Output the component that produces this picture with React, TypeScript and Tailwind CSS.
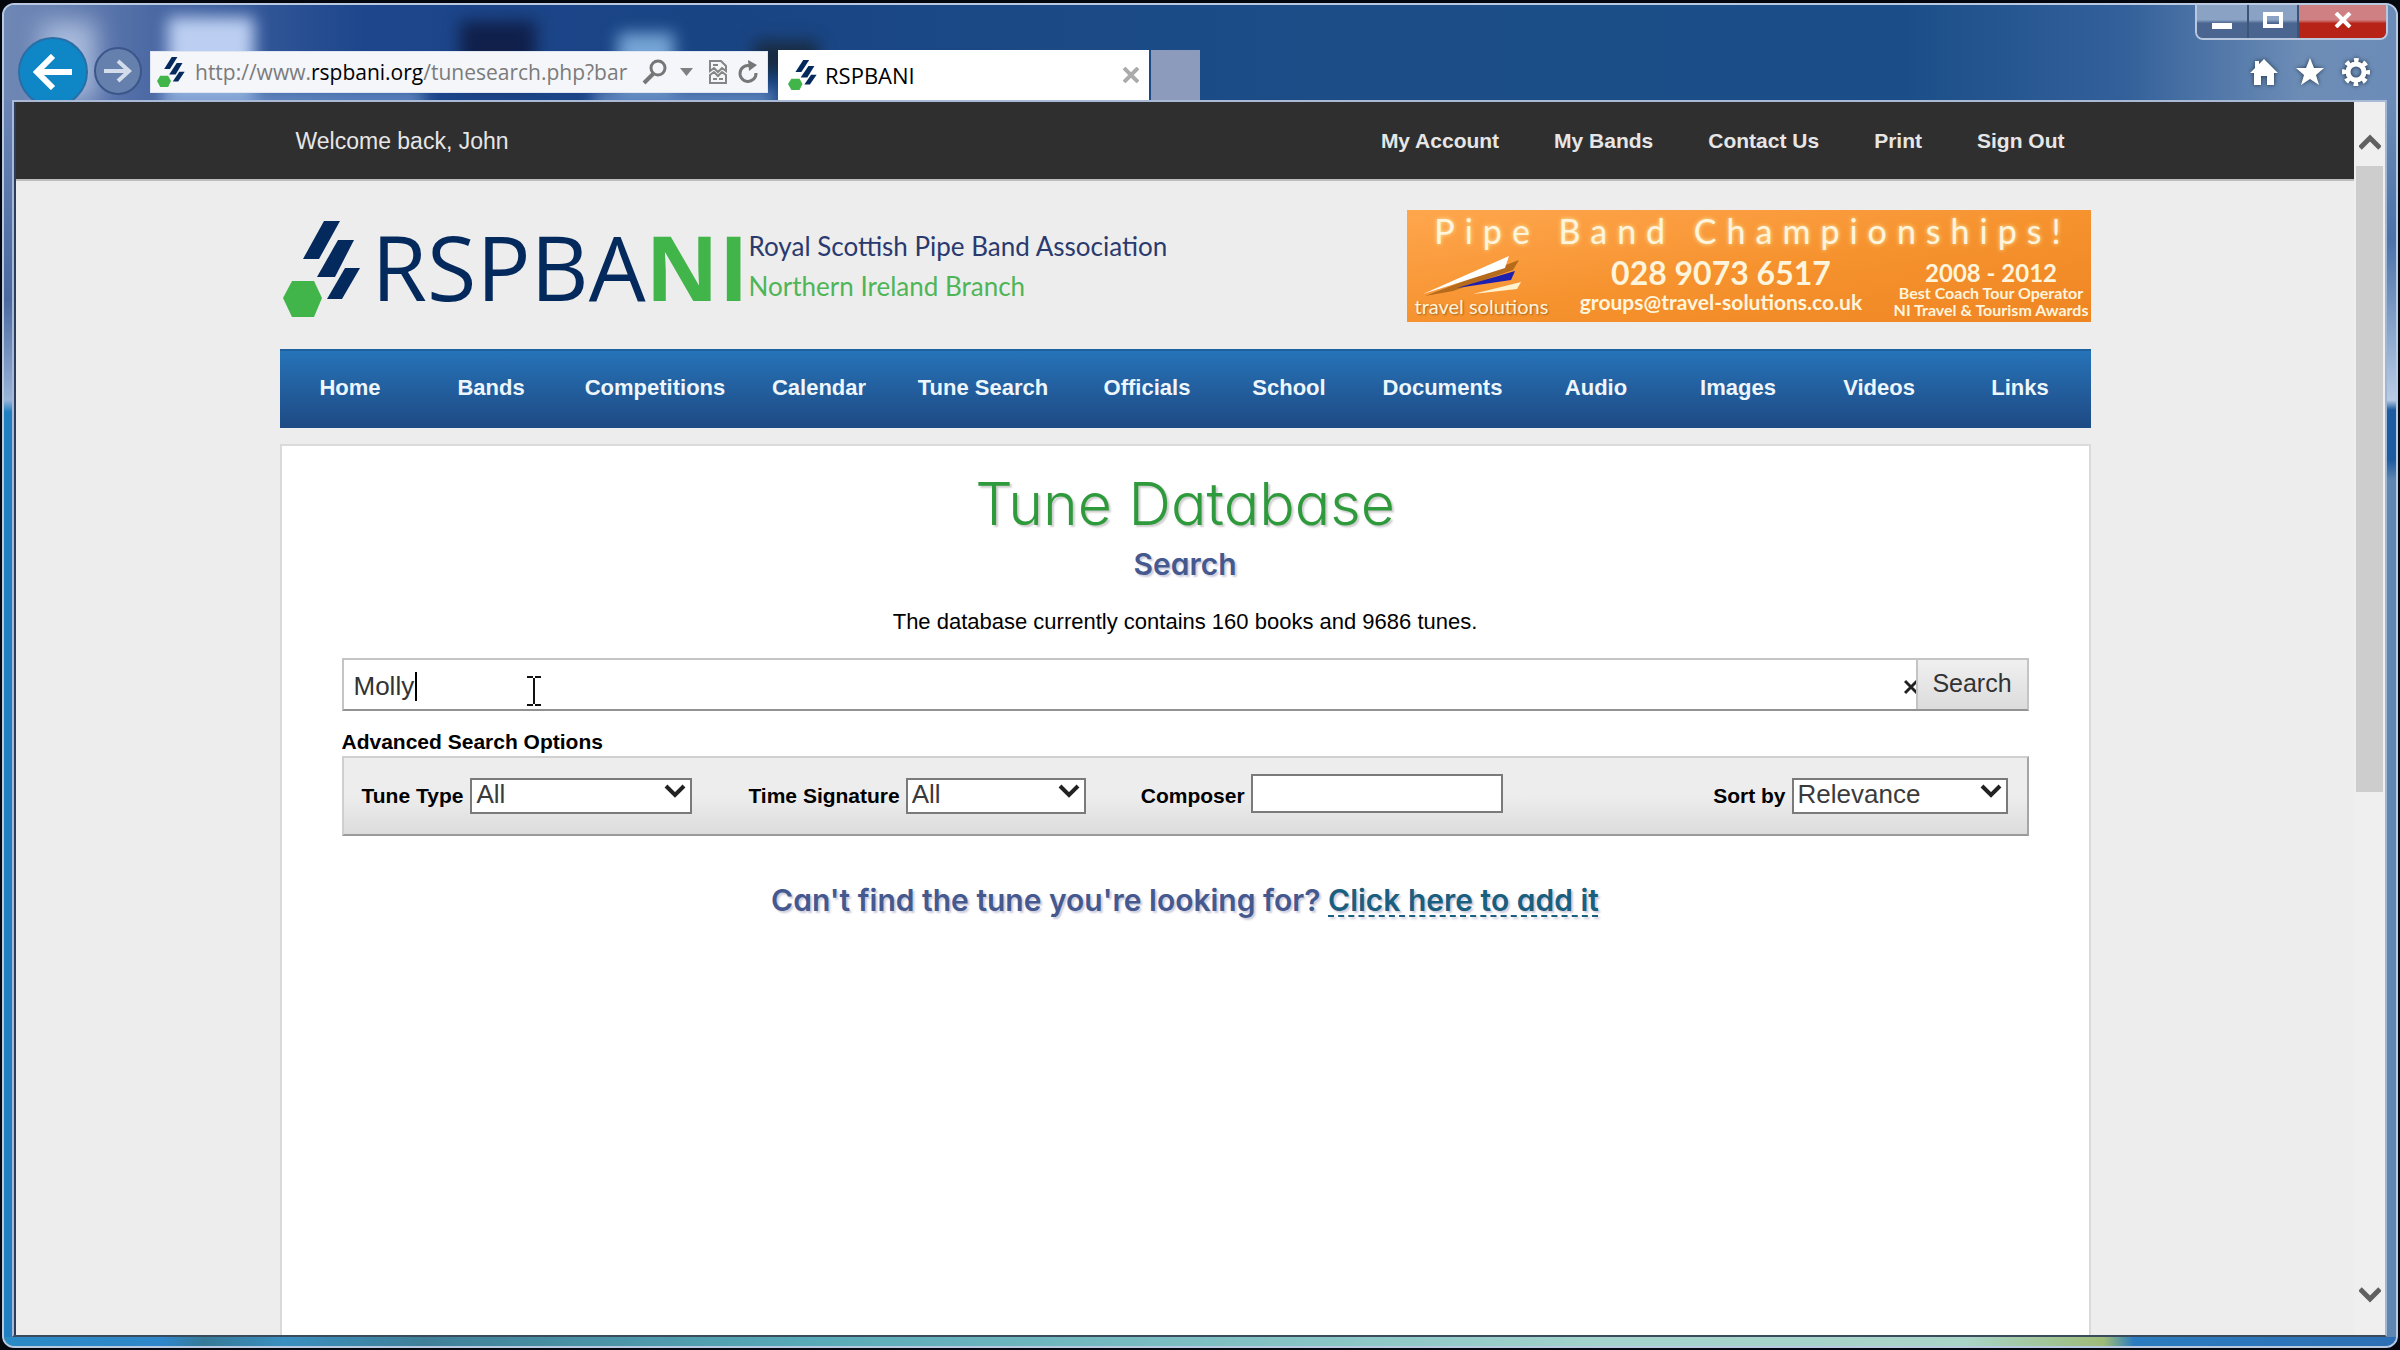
import { useState } from "react";

type NavItem = { label: string; width: string };

const accountLinks = ["My Account", "My Bands", "Contact Us", "Print", "Sign Out"];

const navItems: NavItem[] = [
  { label: "Home", width: "w-[141px]" },
  { label: "Bands", width: "w-[141px]" },
  { label: "Competitions", width: "w-[187px]" },
  { label: "Calendar", width: "w-[141px]" },
  { label: "Tune Search", width: "w-[187px]" },
  { label: "Officials", width: "w-[141px]" },
  { label: "School", width: "w-[143px]" },
  { label: "Documents", width: "w-[164px]" },
  { label: "Audio", width: "w-[143px]" },
  { label: "Images", width: "w-[141px]" },
  { label: "Videos", width: "w-[141px]" },
  { label: "Links", width: "w-[141px]" },
];

function LogoMark({ className }: { className: string }) {
  return (
    <svg viewBox="0 0 78 96" className={className} preserveAspectRatio="none" aria-hidden="true">
      <g fill="#04295c">
        <path d="M41 0H57L36 38H20Z" />
        <path d="M55 19H71L52 56H34Z" />
        <path d="M62 47H77L59 78H44Z" />
      </g>
      <path d="M9 60H31L39 77L31 96H9L0 77Z" fill="#41b549" />
    </svg>
  );
}

function WindowButtons() {
  const base =
    "flex h-[33px] items-center justify-center bg-linear-to-b from-[#8aa2c4] from-45% to-[#4a6690] to-55%";
  return (
    <div className="mr-2 flex overflow-hidden rounded-b-lg border-2 border-t-0 border-[#b9c8de]">
      <button aria-label="Minimize" className={`${base} w-[52px] border-r-2 border-[#3b5479]`}>
        <span className="mt-2 h-[6px] w-[20px] bg-white" />
      </button>
      <button aria-label="Maximize" className={`${base} w-[50px] border-r-2 border-[#3b5479]`}>
        <span className="mb-1 h-[16px] w-[20px] border-4 border-white" />
      </button>
      <button
        aria-label="Close"
        className="flex h-[33px] w-[87px] items-center justify-center bg-linear-to-b from-[#cf8083] from-45% to-[#b82318] to-55%"
      >
        <svg viewBox="0 0 18 16" className="mb-1 h-4 w-[18px]">
          <path d="M2 1L16 15M16 1L2 15" stroke="#fff" strokeWidth="4" />
        </svg>
      </button>
    </div>
  );
}

function AddressBar() {
  return (
    <div className="flex h-[42px] w-[618px] items-center border border-[#dfe6f2] bg-[#f4f6fa] pr-2 pl-[6px]">
      <LogoMark className="h-[30px] w-[28px] shrink-0" />
      <div className="ml-[10px] w-[450px] font-['Open_Sans',sans-serif] text-[21px] leading-[30px] whitespace-nowrap text-[#7b7b7b]">
        http://www.<span className="text-black">rspbani.org</span>/tunesearch.php?bar
      </div>
      <button aria-label="Search" className="text-[#777]">
        <svg viewBox="0 0 26 26" className="size-[26px]" fill="none" stroke="currentColor">
          <circle cx="16" cy="9" r="7" strokeWidth="3" />
          <path d="M11 15L2 24" strokeWidth="4" />
        </svg>
      </button>
      <button aria-label="Show address list" className="ml-3">
        <svg viewBox="0 0 13 8" className="h-2 w-[13px]">
          <path d="M0 0H13L6.5 8Z" fill="#808080" />
        </svg>
      </button>
      <button aria-label="Compatibility view" className="ml-4">
        <svg viewBox="0 0 18 24" className="h-6 w-[18px]" fill="none" stroke="#858585" strokeWidth="2">
          <path d="M1 11V1H12L17 6V11L13 8L9 12L5 8Z" />
          <path d="M1 23V15L5 12L9 16L13 12L17 15V23Z" />
          <path d="M4 19H8M10 19H14M4 5H9" />
        </svg>
      </button>
      <button aria-label="Refresh" className="ml-[10px]">
        <svg viewBox="0 0 22 24" className="h-6 w-[22px]" fill="none">
          <path d="M14 6A8 8 0 1 0 19 13" stroke="#777" strokeWidth="3" />
          <path d="M11 0L20 5L12 11Z" fill="#777" />
        </svg>
      </button>
    </div>
  );
}

function BrowserChrome() {
  return (
    <header className="relative flex h-[95px] items-start overflow-hidden bg-[linear-gradient(90deg,#7088b5_0,#5470a8_120px,#41619f_180px,#1d468c_360px,#194484_700px,#1c4d87_1300px,#1b4e88_1900px,#33609a_2120px,#6d8db6_2300px,#6b8cb8_100%)]">
      {/* desktop icons showing through the glass frame */}
      <div className="absolute top-4 left-9 h-20 w-14 bg-[#a9bbdc] blur-md" />
      <div className="absolute top-3 left-[164px] h-24 w-[86px] bg-[#bccff2] blur-sm" />
      <div className="absolute top-4 left-[456px] h-16 w-[76px] bg-[#10204b] blur-sm" />
      <div className="absolute top-7 left-[614px] h-16 w-[56px] bg-[#76a5d6] blur-sm" />
      <div className="absolute top-9 left-[750px] h-8 w-[64px] bg-[#182b40] blur-sm" />
      <div className="absolute top-[86px] left-[160px] h-4 w-[260px] bg-[#6c92c8] blur-sm" />
      <div className="absolute top-[86px] left-[590px] h-4 w-[180px] bg-[#6c92c8] blur-sm" />

      <nav className="relative mt-[32px] ml-[14px] flex">
        <button
          aria-label="Back"
          className="flex size-[70px] shrink-0 items-center justify-center rounded-full border-2 border-[#2a6ea6] bg-[#0f86c6]"
        >
          <svg viewBox="0 0 40 36" className="h-9 w-10" fill="none" stroke="#fff" strokeWidth="6">
            <path d="M39 18H5M20 2L4 18L20 34" />
          </svg>
        </button>
        <button
          aria-label="Forward"
          className="mt-[10px] ml-[6px] flex size-[48px] shrink-0 items-center justify-center rounded-full border-2 border-[#3a568a] bg-[#6680ad]"
        >
          <svg viewBox="0 0 28 24" className="h-6 w-7" fill="none" stroke="#d3dcea" strokeWidth="4">
            <path d="M0 12H25M14 2L25 12L14 22" />
          </svg>
        </button>
      </nav>
      <div className="relative mt-[46px] ml-[8px]">
        <AddressBar />
      </div>
      <div className="relative mt-[45px] ml-[10px] flex h-[50px] items-stretch">
        <div className="flex w-[371px] items-center bg-white pr-[10px] pl-[10px]">
          <LogoMark className="h-[30px] w-[29px]" />
          <span className="ml-2 flex-1 font-['Open_Sans',sans-serif] text-[22px] leading-[30px] text-black">
            RSPBANI
          </span>
          <button aria-label="Close tab">
            <svg viewBox="0 0 16 16" className="size-4">
              <path d="M1 1L15 15M15 1L1 15" stroke="#ababab" strokeWidth="4" />
            </svg>
          </button>
        </div>
        <button aria-label="New tab" className="ml-[2px] w-[49px] bg-[#8c9abb]" />
      </div>
      <div className="relative ml-auto flex flex-col items-end">
        <WindowButtons />
        <div className="mt-[18px] mr-[26px] flex gap-[18px] text-white">
          <button aria-label="Home">
            <svg viewBox="0 0 28 28" className="size-7 drop-shadow-[0_0_2px_#234]" fill="currentColor">
              <path d="M14 1L28 15H24V27H17V18H11V27H4V15H0L5 10V3H9V6Z" />
            </svg>
          </button>
          <button aria-label="Favorites">
            <svg viewBox="0 0 28 28" className="size-7 drop-shadow-[0_0_2px_#234]" fill="currentColor">
              <path d="M14 0L18 10H28L20 17L23 27L14 21L5 27L8 17L0 10H10Z" />
            </svg>
          </button>
          <button aria-label="Tools">
            <svg viewBox="0 0 28 28" className="size-7 drop-shadow-[0_0_2px_#234]" fill="none" stroke="currentColor">
              <circle cx="14" cy="14" r="8" strokeWidth="5" />
              <circle cx="14" cy="14" r="12" strokeWidth="4" strokeDasharray="4.7 4.72" strokeDashoffset="2.35" />
            </svg>
          </button>
        </div>
      </div>
    </header>
  );
}

function Banner() {
  return (
    <a
      href="#travel"
      className="flex h-[112px] w-[684px] flex-col bg-linear-to-br from-[#ffa64d] via-[#f6932f] to-[#ee8522] font-['Lato',sans-serif] text-[#fff4dc]"
    >
      <span className="pt-[2px] pl-2 text-center text-[34px] leading-[38px] tracking-[10px] whitespace-nowrap [text-shadow:0_0_4px_#ffe9a8]">
        Pipe Band Championships!
      </span>
      <span className="flex flex-1 items-start justify-between pr-[2px] pl-2">
        <span className="flex flex-col pt-1">
          <svg viewBox="0 0 110 42" className="ml-2 h-[42px] w-[110px]">
            <path d="M2 42L96 6L90 16L30 37Z" fill="#b56a1c" />
            <path d="M0 40L86 2L82 14Z" fill="#fff" />
            <path d="M34 34L92 17L88 26Z" fill="#1d1fae" />
            <path d="M50 40L98 28L94 35Z" fill="#fff3cf" />
          </svg>
          <span className="text-[20px] leading-[20px] [text-shadow:1px_1px_2px_#a8621c]">
            travel solutions
          </span>
        </span>
        <span className="flex flex-col items-center pt-1 font-bold">
          <span className="text-[32px] leading-[38px]">028 9073 6517</span>
          <span className="text-[21px] leading-[20px]">groups@travel-solutions.co.uk</span>
        </span>
        <span className="flex flex-col items-center pt-3 font-bold">
          <span className="text-[24px] leading-[22px]">2008 - 2012</span>
          <span className="text-[16px] leading-[17px]">Best Coach Tour Operator</span>
          <span className="text-[16px] leading-[17px]">NI Travel &amp; Tourism Awards</span>
        </span>
      </span>
    </a>
  );
}

function SelectBox({ id, value, className }: { id: string; value: string; className: string }) {
  return (
    <div className={`relative ${className}`}>
      <select
        id={id}
        defaultValue={value}
        className="h-9 w-full appearance-none border-2 border-[#7a7a7a] bg-white pb-1 pl-1 text-[26px] leading-[28px] font-normal text-[#3b3b3b]"
      >
        <option>{value}</option>
      </select>
      <svg
        viewBox="0 0 22 14"
        className="pointer-events-none absolute top-[10px] right-[6px] h-[14px] w-[22px]"
        fill="none"
      >
        <path d="M2 2L11 11L20 2" stroke="#222" strokeWidth="4" />
      </svg>
    </div>
  );
}

function TuneSearch() {
  const [query, setQuery] = useState("Molly");
  const [composer, setComposer] = useState("");

  return (
    <main className="flex-1 border-2 border-b-0 border-[#dadada] bg-white px-[60px] text-black">
      <h1 className="mt-[26px] text-center font-['Inter',sans-serif] text-[59px] leading-[64px] font-light text-[#2e9a3c] [font-feature-settings:'cv11'] [text-shadow:2px_2px_2px_#ccc]">
        Tune Database
      </h1>
      <h2 className="mt-1 text-center font-['Inter',sans-serif] text-[30px] leading-[48px] font-semibold text-[#45598f] [font-feature-settings:'cv11'] [text-shadow:2px_2px_2px_#ccd]">
        Search
      </h2>
      <p className="mt-[18px] text-center text-[22px] leading-[32px]">
        The database currently contains 160 books and 9686 tunes.
      </p>

      <form onSubmit={(event) => event.preventDefault()}>
        <div className="relative mt-[20px] flex h-[53px] border-2 border-[#c4c4c4] border-b-[#929292]">
          <input
            aria-label="Tune name"
            value={query}
            onChange={(event) => setQuery(event.target.value)}
            className="min-w-0 flex-1 pt-[2px] pl-[10px] text-[26px] leading-[32px] text-[#333] outline-none"
          />
          <button type="button" aria-label="Clear" onClick={() => setQuery("")} className="pt-1">
            <svg viewBox="0 0 12 16" className="h-4 w-3">
              <path d="M1 2L13 14M13 2L1 14" stroke="#222" strokeWidth="3" />
            </svg>
          </button>
          <button
            type="submit"
            className="w-[111px] border-l-2 border-[#c4c4c4] bg-linear-to-b from-[#f0f0f0] to-[#dcdcdc] pb-1 text-[25px] leading-[32px] text-[#333]"
          >
            Search
          </button>
          <span className="absolute top-[12px] left-[71px] h-[29px] w-[2px] bg-black" />
          <svg viewBox="0 0 14 30" className="absolute top-[16px] left-[183px] h-[30px] w-[14px]">
            <path d="M0 1H6M8 1H14M7 2V28M0 29H6M8 29H14" stroke="#111" strokeWidth="2" />
          </svg>
        </div>

        <h3 className="mt-[17px] text-[21px] leading-[28px] font-bold">Advanced Search Options</h3>
        <div className="flex h-[80px] items-start border-2 border-[#cfcfcf] border-r-[#a5a5a5] border-b-[#9a9a9a] bg-linear-to-b from-[#ededed] from-50% to-[#dcdcdc] pt-4 pr-[19px] pl-[18px] text-[21px] leading-[44px] font-bold">
          <label htmlFor="tune-type">Tune Type</label>
          <SelectBox id="tune-type" value="All" className="ml-[7px] w-[222px]" />
          <label htmlFor="time-signature" className="ml-[56px]">
            Time Signature
          </label>
          <SelectBox id="time-signature" value="All" className="ml-[6px] w-[180px]" />
          <label htmlFor="composer" className="ml-[55px]">
            Composer
          </label>
          <input
            id="composer"
            value={composer}
            onChange={(event) => setComposer(event.target.value)}
            className="ml-[6px] h-[39px] w-[252px] border-2 border-[#7a7a7a] bg-white px-1 font-normal"
          />
          <label htmlFor="sort-by" className="ml-auto">
            Sort by
          </label>
          <SelectBox id="sort-by" value="Relevance" className="ml-[6px] w-[216px]" />
        </div>
      </form>

      <p className="mt-[44px] text-center font-['Inter',sans-serif] text-[30px] leading-[40px] font-semibold text-[#45598f] [font-feature-settings:'cv11'] [text-shadow:2px_2px_2px_#ccd]">
        Can't find the tune you're looking for?{" "}
        <a
          href="#add"
          className="text-[#1b5f7f] underline decoration-dashed decoration-2 underline-offset-4 [text-decoration-skip-ink:none]"
        >
          Click here to add it
        </a>
      </p>
    </main>
  );
}

function Scrollbar() {
  return (
    <div className="flex w-[31px] shrink-0 flex-col bg-[#efefef] px-[2px]">
      <button aria-label="Scroll up" className="flex h-[64px] items-center justify-center pt-4">
        <svg viewBox="0 0 22 18" className="h-[18px] w-[22px]">
          <path d="M1 15L11 5L21 15" fill="none" stroke="#606060" strokeWidth="5" />
        </svg>
      </button>
      <div className="h-[626px] bg-[#cdcdcd]" />
      <button aria-label="Scroll down" className="mt-auto flex h-[80px] items-center justify-center">
        <svg viewBox="0 0 22 18" className="h-[18px] w-[22px]">
          <path d="M1 3L11 13L21 3" fill="none" stroke="#606060" strokeWidth="5" />
        </svg>
      </button>
    </div>
  );
}

export default function App() {
  return (
    <div className="flex min-h-screen flex-col bg-[#05070f] px-[2px] pt-[3px] pb-[2px] font-['Liberation_Sans',Arial,sans-serif]">
      <div className="flex flex-1 flex-col overflow-hidden rounded-xl border-2 border-[#b9c9e2] bg-[#1f7fc0]">
        <BrowserChrome />
        <div className="flex flex-1 flex-col bg-[linear-gradient(90deg,#2a8ac4_0,#2f87c9_160px,#367a98_200px,#3a8fc0_280px,#3f8098_420px,#58aab8_800px,#a3d3cc_1600px,#a9d4c8_1960px,#9dbb78_2100px,#2b7cc0_2130px,#2d6fb4_100%)] pb-[9px]">
          <div className="flex flex-1">
            <div className="w-[8px] shrink-0 bg-[linear-gradient(#6a85b4_0,#4b69a0_200px,#9ab4d8_300px,#1f7fc0_312px,#1f7fc0_100%)]" />
            <div className="flex flex-1 border-2 border-[#a9b9d6] border-r-[#9fb6d4] border-b-[#3b4a5c]">
              <div className="flex flex-1 flex-col border-l-2 border-[#2b3c5c] bg-[#ededed]">
                <div className="border-b-2 border-[#bdbdbd] bg-[#2f2f2f]">
                  <div className="mx-auto flex h-[77px] w-full max-w-[1811px] items-center justify-between pr-[26px] pl-4 text-[#e6e6e6]">
                    <span className="text-[23px] leading-[32px]">Welcome back, John</span>
                    <nav className="flex gap-[55px] text-[21px] leading-[32px] font-bold">
                      {accountLinks.map((label) => (
                        <a key={label} href="#account">
                          {label}
                        </a>
                      ))}
                    </nav>
                  </div>
                </div>

                <div className="mx-auto flex w-full max-w-[1811px] flex-1 flex-col">
                  <div className="flex h-[168px] items-start justify-between pt-[29px]">
                    <a href="#home" className="flex items-start pl-[3px]">
                      <LogoMark className="mt-[11px] h-[96px] w-[78px]" />
                      <span className="mt-[8px] ml-[11px] font-['Open_Sans',sans-serif] text-[90px] leading-[96px] text-[#04295c]">
                        RSPBA<span className="font-bold text-[#41b549]">NI</span>
                      </span>
                      <span className="mt-[16px] flex flex-col font-['Lato',sans-serif] text-[26px] leading-[40px] whitespace-nowrap text-[#2a3a6e]">
                        <span>Royal Scottish Pipe Band Association</span>
                        <span className="text-[#4fb556]">Northern Ireland Branch</span>
                      </span>
                    </a>
                    <Banner />
                  </div>

                  <nav className="mb-[16px] flex h-[79px] items-center border-t-2 border-[#1d629f] bg-linear-to-b from-[#2673b8] to-[#1e4a84] pb-1 text-[22px] leading-[32px] font-bold text-[#eef6fd]">
                    {navItems.map((item) => (
                      <a key={item.label} href="#nav" className={`text-center ${item.width}`}>
                        {item.label}
                      </a>
                    ))}
                  </nav>

                  <TuneSearch />
                </div>
              </div>
              <Scrollbar />
            </div>
            <div className="w-[9px] shrink-0 bg-[linear-gradient(#6c8cb6_0,#4a72a8_140px,#b9cce6_300px,#1d5ba0_310px,#1d5ba0_360px,#5f86b0_380px,#5f86b0_100%)]" />
          </div>
        </div>
      </div>
    </div>
  );
}
